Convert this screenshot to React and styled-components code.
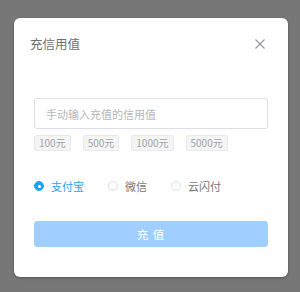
import React, { useState } from "react";
import styled, { createGlobalStyle } from "styled-components";

const GlobalStyle = createGlobalStyle`
  html, body {
    margin: 0;
    padding: 0;
    background: #777777;
    font-family: "Noto Sans CJK SC", "Noto Sans", sans-serif;
  }
`;

const Overlay = styled.div`
  min-height: 292px;
  display: flex;
  align-items: flex-start;
  padding: 18px 0 0 14px;
  box-sizing: border-box;
`;

const Dialog = styled.div`
  width: 274px;
  background: #fff;
  border-radius: 6px;
  box-shadow: 0 1px 3px rgba(0, 0, 0, 0.3);
  box-sizing: border-box;
`;

const Header = styled.div`
  display: flex;
  align-items: center;
  justify-content: space-between;
  padding: 17px 23px 0 16px;
  height: 18px;
  box-sizing: content-box;
`;

const Title = styled.span`
  font-size: 12.5px;
  line-height: 18px;
  color: #707070;
`;

const Close = styled.button`
  border: none;
  background: none;
  padding: 0;
  width: 10px;
  height: 10px;
  display: flex;
  cursor: pointer;
`;

const Body = styled.div`
  padding: 45px 20px 30px;
`;

const Input = styled.input`
  display: block;
  width: 100%;
  height: 31px;
  box-sizing: border-box;
  border: 1px solid #dcdfe6;
  border-radius: 3px;
  padding: 0 11px;
  font-family: inherit;
  font-size: 11px;
  color: #606266;
  outline: none;
  &::placeholder {
    color: #b4b6bb;
  }
`;

const Tags = styled.div`
  display: flex;
  gap: 12px;
  margin-top: 6px;
`;

const Tag = styled.span`
  height: 16px;
  line-height: 14px;
  padding: 0 4px;
  box-sizing: border-box;
  background: #f4f4f5;
  border: 1px solid #e9e9eb;
  border-radius: 2px;
  font-size: 10px;
  color: #a0a3a8;
  cursor: pointer;
`;

const Radios = styled.div`
  display: flex;
  align-items: center;
  margin-top: 28px;
  height: 14px;
`;

const Radio = styled.label`
  display: flex;
  align-items: center;
  margin-right: 24px;
  cursor: pointer;
`;

const Dot = styled.span`
  width: 10px;
  height: 10px;
  box-sizing: border-box;
  border-radius: 50%;
  border: 1px solid ${(p) => (p.$on ? "#1ea5f0" : "#dcdfe6")};
  background: ${(p) => (p.$on ? "#1ea5f0" : "#fff")};
  display: flex;
  align-items: center;
  justify-content: center;
  &::after {
    content: "";
    width: 3px;
    height: 3px;
    border-radius: 50%;
    background: #fff;
    display: ${(p) => (p.$on ? "block" : "none")};
  }
`;

const RadioText = styled.span`
  padding-left: 7px;
  font-size: 11px;
  line-height: 14px;
  color: ${(p) => (p.$on ? "#1ea5f0" : "#777")};
`;

const Submit = styled.button`
  display: block;
  width: 100%;
  height: 26px;
  margin-top: 28px;
  border: 1px solid #a0cfff;
  border-radius: 3px;
  background: #a0cfff;
  color: #fff;
  font-family: inherit;
  font-size: 11.5px;
  letter-spacing: 1px;
  cursor: not-allowed;
`;

const amounts = ["100元", "500元", "1000元", "5000元"];
const methods = ["支付宝", "微信", "云闪付"];

export default function App() {
	const [method, setMethod] = useState("支付宝");
	const [value, setValue] = useState("");

	return (
		<>
			<GlobalStyle />
			<Overlay>
				<Dialog>
					<Header>
						<Title>充信用值</Title>
						<Close aria-label="close">
							<svg width="10" height="10" viewBox="0 0 10 10">
								<path d="M0.5 0.5L9.5 9.5M9.5 0.5L0.5 9.5" stroke="#909399" strokeWidth="1.1" />
							</svg>
						</Close>
					</Header>
					<Body>
						<Input
							placeholder="手动输入充值的信用值"
							value={value}
							onChange={(e) => setValue(e.target.value)}
						/>
						<Tags>
							{amounts.map((a) => (
								<Tag key={a} onClick={() => setValue(parseInt(a))}>{a}</Tag>
							))}
						</Tags>
						<Radios>
							{methods.map((m) => (
								<Radio key={m} onClick={() => setMethod(m)}>
									<Dot $on={method === m} />
									<RadioText $on={method === m}>{m}</RadioText>
								</Radio>
							))}
						</Radios>
						<Submit disabled={!value}>充 值</Submit>
					</Body>
				</Dialog>
			</Overlay>
		</>
	);
}
